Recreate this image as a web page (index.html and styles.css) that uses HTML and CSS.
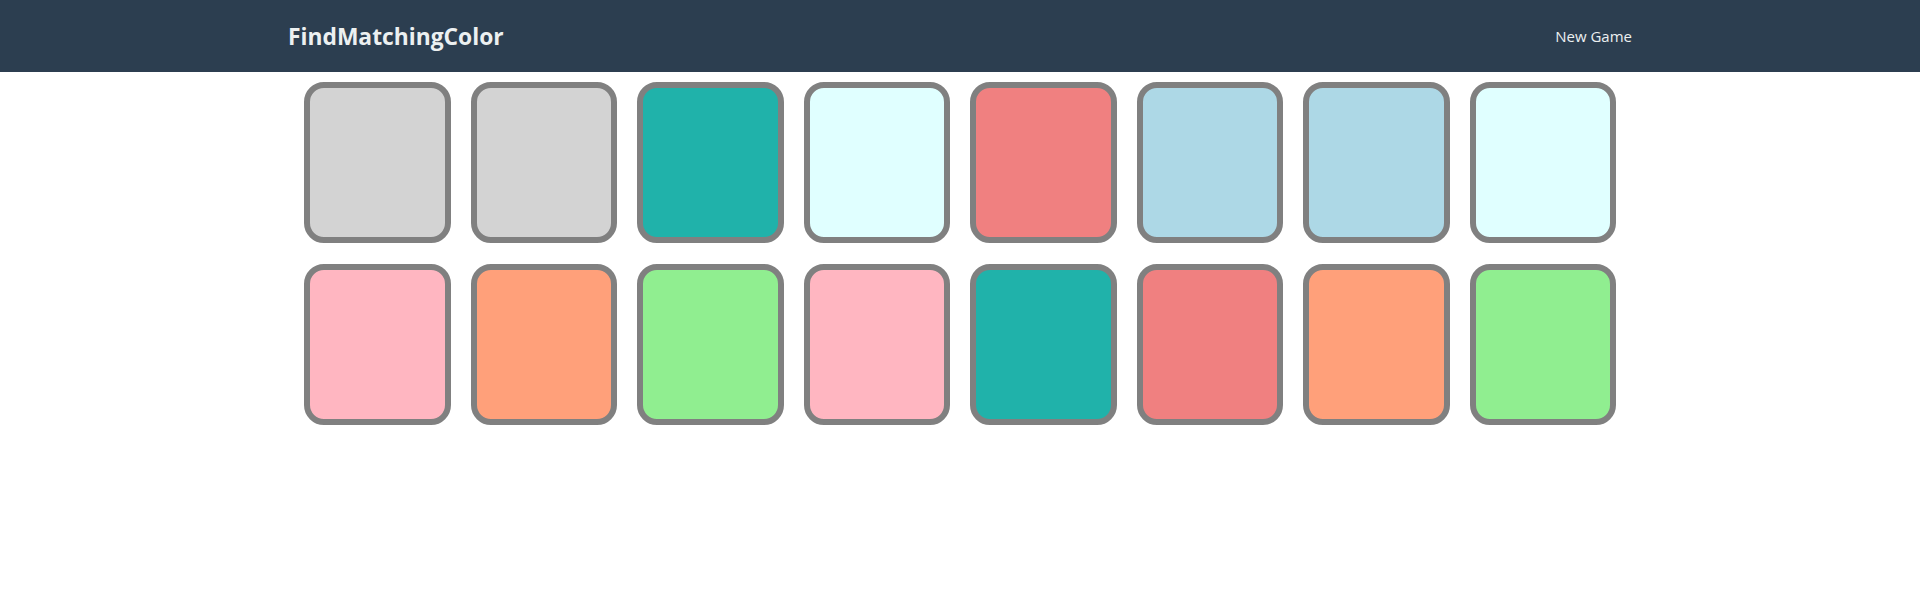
FILE: index.html
```html
<!DOCTYPE html>
<html lang="en">
<head>
<meta charset="utf-8">
<title>FindMatchingColor</title>
<link rel="stylesheet" href="styles.css">
</head>
<body>
<header class="navbar">
  <div class="navbar-inner">
    <div class="brand">FindMatchingColor</div>
    <a class="new-game" href="#">New Game</a>
  </div>
</header>
<main class="board">
  <div class="card c-lightgray"></div>
  <div class="card c-lightgray"></div>
  <div class="card c-seagreen"></div>
  <div class="card c-cyan"></div>
  <div class="card c-coral"></div>
  <div class="card c-blue"></div>
  <div class="card c-blue"></div>
  <div class="card c-cyan"></div>
  <div class="card c-pink"></div>
  <div class="card c-salmon"></div>
  <div class="card c-green"></div>
  <div class="card c-pink"></div>
  <div class="card c-seagreen"></div>
  <div class="card c-coral"></div>
  <div class="card c-salmon"></div>
  <div class="card c-green"></div>
</main>
</body>
</html>
```
FILE: styles.css
```css
* { box-sizing: border-box; }
html, body { margin: 0; padding: 0; background: #ffffff; }
body { font-family: "Open Sans", "Noto Sans", sans-serif; }

.navbar {
  background: #2c3e50;
  height: 72px;
}
.navbar-inner {
  width: 1344px;
  height: 100%;
  margin: 0 auto;
  display: flex;
  align-items: center;
  justify-content: space-between;
}
.brand {
  color: #ecf0f1;
  font-weight: 700;
  font-size: 22.8px;
}
.new-game {
  color: #ecf0f1;
  font-size: 15px;
  text-decoration: none;
}

.board {
  width: 1312px;
  margin: 10px auto 0;
  display: grid;
  grid-template-columns: repeat(8, 1fr);
  column-gap: 20px;
  row-gap: 21px;
}
.card {
  height: 161px;
  border: 6px solid #808080;
  border-radius: 20px;
}
.c-lightgray { background: #d3d3d3; }
.c-seagreen { background: #20b2aa; }
.c-cyan { background: #e0ffff; }
.c-coral { background: #f08080; }
.c-blue { background: #add8e6; }
.c-pink { background: #ffb6c1; }
.c-salmon { background: #ffa07a; }
.c-green { background: #90ee90; }
```
